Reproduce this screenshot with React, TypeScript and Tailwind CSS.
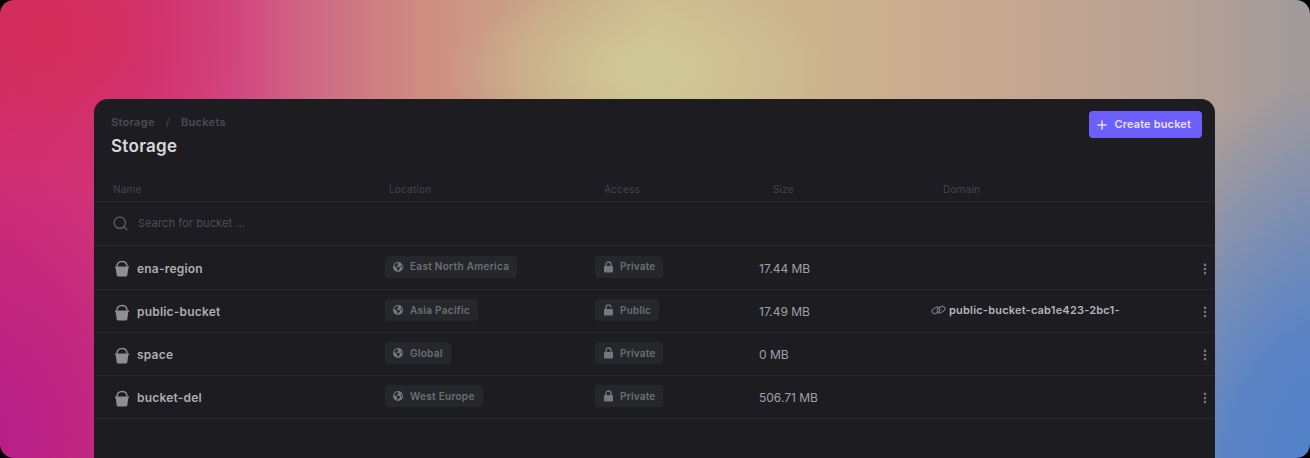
import { Plus, Search, EllipsisVertical } from "lucide-react";
import { FaEarthAmericas } from "react-icons/fa6";

function Bucket() {
  return (
    <svg width="16" height="17" viewBox="0 0 16 17" fill="none" className="shrink-0">
      <path d="M3 6.5C3 3.4 5 1.4 8 1.4s5 2 5 5.1" stroke="#8e8e93" strokeWidth="1.5" />
      <path d="M1 6.5h14v1.6h-.7l-1 7.2c-.1.7-.6 1.2-1.3 1.2H4c-.7 0-1.2-.5-1.3-1.2l-1-7.2H1z" fill="#8e8e93" />
    </svg>
  );
}

function Padlock({ open }: { open: boolean }) {
  return (
    <svg width="11" height="12" viewBox="0 0 11 12" fill="none" className="shrink-0">
      <path d={open ? "M3 5V3.2C3 1.8 4 .9 5.5.9S8 1.8 8 3.2V3.6" : "M3 5.5V3.4C3 1.9 4 1 5.5 1S8 1.9 8 3.4v2.1"} stroke="#77777d" strokeWidth="1.3" />
      <rect x="1" y="5" width="9" height="6.6" rx="1" fill="#77777d" />
    </svg>
  );
}

function Chain() {
  return (
    <svg width="15" height="12" viewBox="0 0 15 12" fill="none" className="shrink-0">
      <rect x="0.9" y="3.9" width="8" height="5" rx="2.5" transform="rotate(-30 4.9 6.4)" stroke="#6e6e74" strokeWidth="1.3" />
      <rect x="6.1" y="3.1" width="8" height="5" rx="2.5" transform="rotate(-30 10.1 5.6)" stroke="#6e6e74" strokeWidth="1.3" />
    </svg>
  );
}

const rows = [
  { name: "ena-region", loc: "East North America", access: "Private", size: "17.44 MB", domain: "" },
  { name: "public-bucket", loc: "Asia Pacific", access: "Public", size: "17.49 MB", domain: "public-bucket-cab1e423-2bc1-" },
  { name: "space", loc: "Global", access: "Private", size: "0 MB", domain: "" },
  { name: "bucket-del", loc: "West Europe", access: "Private", size: "506.71 MB", domain: "" },
];

export default function App() {
  return (
    <div className="bg-black w-[1310px] h-[458px]">
      <div className="w-[1310px] h-[458px] overflow-hidden rounded-[14px] font-['Inter',sans-serif] pt-[99px] pl-[94px] bg-[radial-gradient(ellipse_190px_90px_at_640px_70px,rgba(208,204,152,0.8)_0%,rgba(208,200,152,0)_100%),radial-gradient(ellipse_300px_400px_at_1340px_480px,#4f80cc_0%,rgba(79,128,204,0.85)_40%,rgba(110,145,185,0)_100%),radial-gradient(ellipse_240px_280px_at_-20px_440px,rgba(178,28,140,0.9)_0%,rgba(190,30,135,0)_100%),radial-gradient(ellipse_200px_170px_at_50px_30px,rgba(212,44,84,0.85)_0%,rgba(212,44,84,0)_100%),linear-gradient(90deg,#cf2e72_0%,#cf3478_10%,#d2467f_18%,#cf6a84_24%,#ce8c82_32%,#c8a888_42%,#ccbc90_50%,#ccb48e_62%,#c8a890_75%,#b9a294_88%,#a09a9c_100%)]">
        <div className="w-[1121px] h-[359px] bg-[#1c1c21] rounded-t-[14px] flex flex-col">
          <div className="flex justify-between h-[82px] pl-[17px] pr-[13px] pt-[12px]">
            <div>
              <div className="flex items-center h-[22px] text-[11px] font-semibold text-[#4c4c52] tracking-[0.3px]">
                <span>Storage</span>
                <span className="mx-[11px] font-normal">/</span>
                <span>Buckets</span>
              </div>
              <h1 className="mt-[1px] text-[17px] leading-[24px] font-semibold text-[#d8d8dc] tracking-[0.3px]">Storage</h1>
            </div>
            <button className="flex items-center gap-[5px] h-[27px] pl-[6px] pr-[11px] rounded-[4px] bg-[#6d5ffd] text-[#e6e2ff] text-[11px] font-semibold tracking-[0.15px]">
              <Plus size={14} strokeWidth={2.5} />
              Create bucket
            </button>
          </div>
          <div className="grid grid-cols-[276px_215px_169px_170px_1fr] h-[21px] border-b border-[#28282d] pl-[19px] text-[10px] leading-[16px] text-[#46464c] tracking-[0.2px]">
            <span>Name</span>
            <span>Location</span>
            <span>Access</span>
            <span>Size</span>
            <span>Domain</span>
          </div>
          <div className="flex items-center h-[44px] border-b border-[#28282d] pl-[18px] gap-[9px] text-[11px] text-[#4f4f55] tracking-[0.1px]">
            <Search size={17} strokeWidth={1.75} className="text-[#5f5f65]" />
            <span>Search for bucket ...</span>
          </div>
          {rows.map((r, i) => (
            <div key={r.name} className={`grid grid-cols-[291px_210px_164px_172px_1fr_20px] items-center border-b border-[#28282d] text-[12px] ${i === 0 ? "h-[44px]" : "h-[43px]"}`}>
              <div className="flex items-center gap-[7px] pl-[20px] pt-[2px] font-semibold text-[#adadb2] tracking-[0.2px]">
                <Bucket />
                {r.name}
              </div>
              <div className="flex pb-[2px]">
                <span className="inline-flex items-center gap-[7px] h-[22px] px-[8px] rounded-[4px] bg-[#26272b] text-[10px] font-semibold text-[#6e6e74] tracking-[0.3px]">
                  <FaEarthAmericas size={10} className="text-[#77777d]" />
                  {r.loc}
                </span>
              </div>
              <div className="flex pb-[2px]">
                <span className="inline-flex items-center gap-[6px] h-[22px] px-[8px] rounded-[4px] bg-[#26272b] text-[10px] font-semibold text-[#6e6e74] tracking-[0.2px]">
                  <Padlock open={r.access === "Public"} />
                  {r.access}
                </span>
              </div>
              <div className="pt-[2px] text-[#a0a0a5]">{r.size}</div>
              <div className="flex items-center gap-[3px] pb-[2px] text-[11px] font-semibold text-[#b4b4b8] tracking-[0.2px]">
                {r.domain && <Chain />}
                {r.domain}
              </div>
              <div className="flex justify-center pt-[2px]">
                <EllipsisVertical size={14} strokeWidth={2.5} className="text-[#77777d]" />
              </div>
            </div>
          ))}
        </div>
      </div>
    </div>
  );
}
